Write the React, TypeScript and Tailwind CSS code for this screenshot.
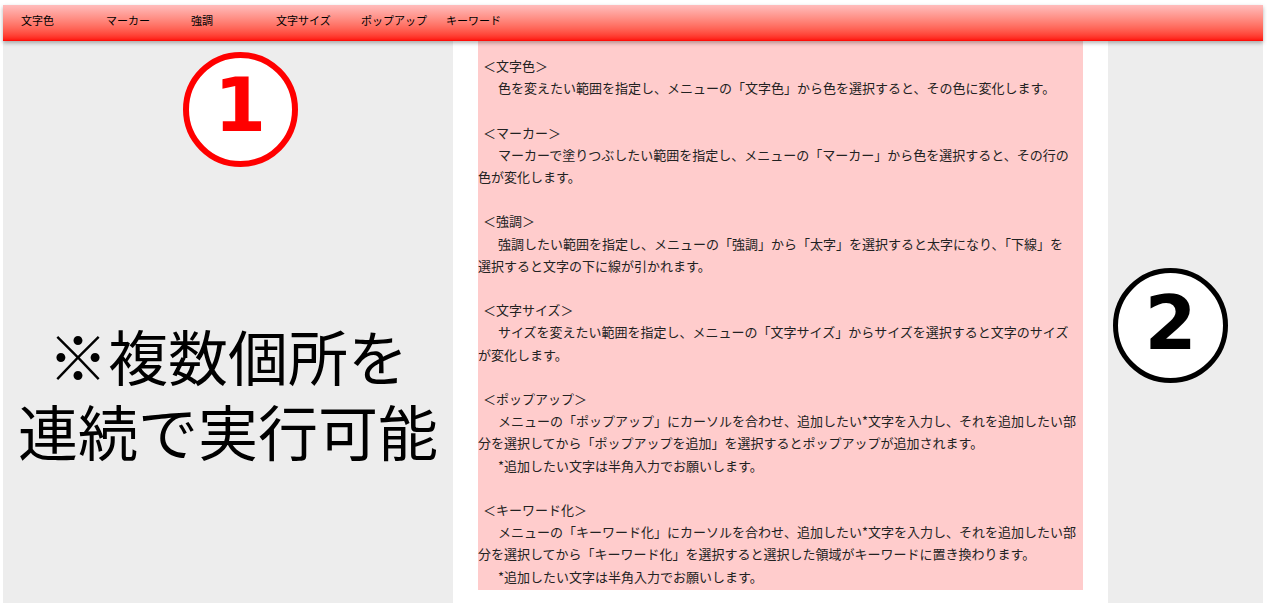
const menu = ['文字色', 'マーカー', '強調', '文字サイズ', 'ポップアップ', 'キーワード'];

type Line = { t: string; kind: 'head' | 'indent' | 'cont' | 'blank' };

const lines: Line[] = [
  { t: '＜文字色＞', kind: 'head' },
  { t: '色を変えたい範囲を指定し、メニューの「文字色」から色を選択すると、その色に変化します。', kind: 'indent' },
  { t: '', kind: 'blank' },
  { t: '＜マーカー＞', kind: 'head' },
  { t: 'マーカーで塗りつぶしたい範囲を指定し、メニューの「マーカー」から色を選択すると、その行の', kind: 'indent' },
  { t: '色が変化します。', kind: 'cont' },
  { t: '', kind: 'blank' },
  { t: '＜強調＞', kind: 'head' },
  { t: '強調したい範囲を指定し、メニューの「強調」から「太字」を選択すると太字になり、「下線」を', kind: 'indent' },
  { t: '選択すると文字の下に線が引かれます。', kind: 'cont' },
  { t: '', kind: 'blank' },
  { t: '＜文字サイズ＞', kind: 'head' },
  { t: 'サイズを変えたい範囲を指定し、メニューの「文字サイズ」からサイズを選択すると文字のサイズ', kind: 'indent' },
  { t: 'が変化します。', kind: 'cont' },
  { t: '', kind: 'blank' },
  { t: '＜ポップアップ＞', kind: 'head' },
  { t: 'メニューの「ポップアップ」にカーソルを合わせ、追加したい*文字を入力し、それを追加したい部', kind: 'indent' },
  { t: '分を選択してから「ポップアップを追加」を選択するとポップアップが追加されます。', kind: 'cont' },
  { t: '*追加したい文字は半角入力でお願いします。', kind: 'indent' },
  { t: '', kind: 'blank' },
  { t: '＜キーワード化＞', kind: 'head' },
  { t: 'メニューの「キーワード化」にカーソルを合わせ、追加したい*文字を入力し、それを追加したい部', kind: 'indent' },
  { t: '分を選択してから「キーワード化」を選択すると選択した領域がキーワードに置き換わります。', kind: 'cont' },
  { t: '*追加したい文字は半角入力でお願いします。', kind: 'indent' },
];

const jp = "font-['Noto_Sans_CJK_JP',sans-serif]";

export default function App() {
  return (
    <div className="w-[1267px] h-[609px] bg-white pt-[5px] pl-[3px]">
      <div className="w-[1260px] flex flex-col">
        <div className={`relative z-10 h-[36px] flex items-center pl-[18px] pb-[6px] bg-gradient-to-b from-[#ffbcbc] to-[#ff0000] shadow-[0_2px_4px_rgba(0,0,0,0.3)] ${jp}`}>
          {menu.map((m) => (
            <div key={m} className="w-[85px] text-[11px] text-black whitespace-nowrap">
              {m}
            </div>
          ))}
        </div>

        <div className="flex h-[562px]">
          <div className="w-[450px] bg-[#ededed] flex flex-col items-center pt-[11px]">
            <div className="ml-[24px] w-[115px] h-[115px] rounded-full border-[6px] border-[#ff0000] bg-white flex items-center justify-center">
              <span className="font-['DejaVu_Sans',sans-serif] font-bold text-[75px] leading-none text-[#ff0000] -mt-[9px]">1</span>
            </div>
            <div className={`mt-[150px] text-center text-[60px] leading-[75px] text-black ${jp}`}>
              <div className="h-[75px]">※複数個所を</div>
              <div className="h-[75px]">連続で実行可能</div>
            </div>
          </div>

          <div className="w-[655px] bg-white px-[25px]">
            <div className={`h-[549px] bg-[#ffcccc] pt-[14px] text-[13px] leading-[22.2px] text-[#222] ${jp}`}>
              {lines.map((l, i) =>
                l.kind === 'blank' ? (
                  <div key={i} className="h-[22.2px]" />
                ) : (
                  <div
                    key={i}
                    className={`whitespace-nowrap ${l.kind === 'head' ? 'pl-[5px]' : l.kind === 'indent' ? 'pl-[20px]' : ''}`}
                  >
                    {l.t}
                  </div>
                )
              )}
            </div>
          </div>

          <div className="w-[155px] bg-[#ededed] pt-[227px] pl-[5px]">
            <div className="w-[115px] h-[115px] rounded-full border-[5px] border-black bg-white flex items-center justify-center">
              <span className="font-['DejaVu_Sans',sans-serif] font-bold text-[75px] leading-none text-black -mt-[4px]">2</span>
            </div>
          </div>
        </div>
      </div>
    </div>
  );
}
